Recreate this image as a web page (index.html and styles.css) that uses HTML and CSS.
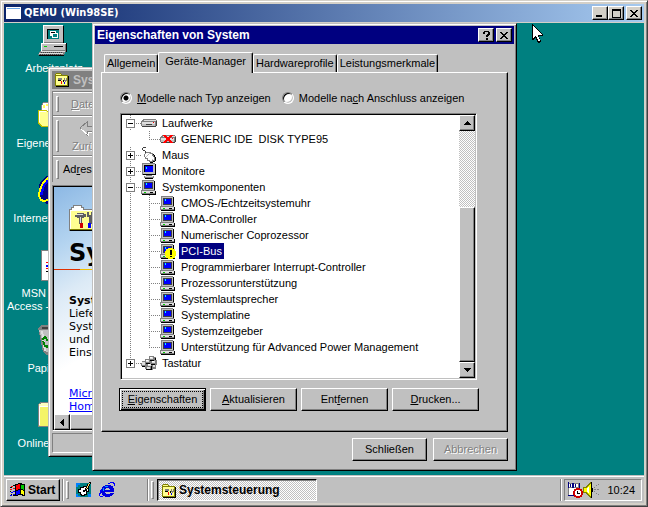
FILE: index.html
```
<!DOCTYPE html>
<html lang="de">
<head>
    <meta charset="UTF-8">
    <meta name="viewport" content="width=device-width, initial-scale=1.0">
    <title>QEMU (Win98SE)</title>
    <link rel="stylesheet" href="styles.css">
</head>
<body>

<!-- shared icons -->
<svg class="sprites" aria-hidden="true">
    <symbol id="pc" viewBox="0 0 16 16">
        <path fill="#808080" d="M1 1h12v10H1z"/>
        <path fill="#c0c0c0" d="M2 2h11v9H2z"/>
        <path fill="#000" d="M13 2h1v9h-1z"/>
        <path fill="#404040" d="M3 3h9v7H3z"/>
        <path fill="#00f" d="M4 4h7v5H4z"/>
        <path fill="#0ff" d="M5 4h1v2H5z"/>
        <path fill="#808080" d="M0 11h14v4H0z"/>
        <path fill="#dfdfdf" d="M1 12h13v2H1z"/>
        <path fill="#000" d="M14 12h1v4H1v-1h13zM9 13h3v1H9z"/>
        <path fill="#0c0" d="M3 13h2v1H3z"/>
    </symbol>
    <symbol id="monitor" viewBox="0 0 16 16">
        <path fill="#808080" d="M1 0h13v12H1z"/>
        <path fill="#c0c0c0" d="M2 1h12v10H2z"/>
        <path fill="#000" d="M14 1h1v11H2v-1h12zM3 2h9v7H3z"/>
        <path fill="#00f" d="M4 3h8v6H4z"/>
        <path fill="#0ff" d="M5 4h1v2H5z"/>
        <path fill="#808080" d="M5 12h6v1H5zM3 13h10v2H3z"/>
        <path fill="#dfdfdf" d="M4 13h8v1H4z"/>
        <path fill="#000" d="M4 15h8v1H4z"/>
    </symbol>
    <symbol id="drive" viewBox="0 0 16 16">
        <path fill="#808080" d="M2 4h13v1h1v6h-1v1H1v-1H0V6h1V5h1z"/>
        <path fill="#dfdfdf" d="M3 5h12v1H3zM1 7h13v2H1z"/>
        <path fill="#c0c0c0" d="M1 9h13v2H1z"/>
        <path fill="#404040" d="M5 9h6v1H5zM1 12v-1h14V6h1v5h-1v1z"/>
        <path fill="#f00" d="M12 7h1v1h-1z"/>
    </symbol>
    <symbol id="mouse" viewBox="0 0 16 16">
        <path fill="#404040" d="M2 0h3v1H2zM1 1h1v2H1zM2 3h2v1H2zM4 4h1v2H4z"/>
        <path fill="#808080" d="M5 5h5v1h2v2h1v2h1v4h-2v1H8v-1H6v-2H4v-2H3V7h1V6h1z"/>
        <path fill="#fff" d="M5 6h4v1h2v2h1v1h1v3h-2v1H9v-1H7v-2H5v-1H4V7h1z"/>
        <path fill="#c0c0c0" d="M8 6h1v1H8zM7 7h1v1H7zM6 8h1v1H6zM5 9h1v1H5zM11 12h1v1h-1z"/>
        <path fill="#000" d="M12 7h1v1h1v2h1v4h-1v1h-2v1H9v-1h3v-1h2v-4h-1V8h-1z"/>
    </symbol>
    <symbol id="keyboard" viewBox="0 0 16 16">
        <path fill="#808080" d="M8 1h5v1h2v3h1v5h-1v4h-3v1H6v-1H4v-2H1v-1H0V8h1V6h3V4h4z"/>
        <path fill="#dfdfdf" d="M9 2h3v2H9zM5 5h3v2H5zM1 7h3v3H1zM11 6h3v2h-3zM7 9h3v2H7zM6 12h3v2H6zM12 10h2v2h-2z"/>
        <path fill="#000" d="M9 5h4v1H9zM5 8h4v1H5zM1 11h3v1H1zM10 9h4v1h-4zM14 3h1v2h-1zM10 11h1v4h-1zM5 14h5v1H5z"/>
        <path fill="#fff" d="M9 2h2v1H9zM5 5h2v1H5zM11 6h2v1h-2zM7 9h2v1H7z"/>
    </symbol>
    <symbol id="cpl" viewBox="0 0 16 16">
        <path fill="#808000" d="M1 2h1V1h5v1h1v1h6v11H1z"/>
        <path fill="#ffff90" d="M2 2h5v1H2zM2 4h11v9H2z"/>
        <path fill="#000" d="M14 4h1v11H2v-1h12z"/>
        <path fill="#808080" d="M4 6h4v2H4zM10 6h1v2h1V6h1v3h-1v1h-1V9h-1z"/>
        <path fill="#000" d="M4 8h3v1H4zM9 8h1v2H9z"/>
        <path fill="#f00" d="M7 9h1v3H7z"/>
        <path fill="#00f" d="M10 10h1v2h-1z"/>
    </symbol>
    <symbol id="ie" viewBox="0 0 16 16">
        <path fill="#0000e0" d="M6 3h6v1h2v2h1v4H6v1h1v1h4v-1h4v1h-1v1h-1v1h-2v1H6v-1H4v-1H3v-2H2V7h1V5h1V4h2zM6 8h5V7h-1V6H7v1H6z"/>
        <path fill="#00f" d="M11 0h4v1h1v3h-1V2h-1V1h-3v1H9V1h2zM2 7h1v2H2v3H1v2h3v1H1v-1H0v-3h1V8h1z"/>
        <path fill="#00a0ff" d="M6 4h3v1H6zM4 6h1v3H4z"/>
    </symbol>
    <symbol id="close" viewBox="0 0 8 7"><path d="M0 0h2v1h1v1h2V1h1V0h2v1H7v1H6v1H5v1h1v1h1v1h1v1H6V6H5V5H3v1H2v1H0V6h1V5h1V4h1V3H2V2H1V1H0z"/></symbol>
    <symbol id="up" viewBox="0 0 7 4"><path d="M3 0h1v1h1v1h1v1h1v1H0V3h1V2h1V1h1z"/></symbol>
    <symbol id="down" viewBox="0 0 7 4"><path d="M0 0h7v1H6v1H5v1H4v1H3V3H2V2H1V1H0z"/></symbol>
    <symbol id="left" viewBox="0 0 4 7"><path d="M4 0v7H3V6H2V5H1V4H0V3h1V2h1V1h1V0z"/></symbol>
</svg>

<div class="qemu">
    <header class="qemu-title">
        <svg class="icon16" viewBox="0 0 16 16"><path fill="#fff" d="M0 2h15v12H0z"/><path fill="#6aa6e8" d="M1 3h13v1H1z"/></svg>
        <h1>QEMU (Win98SE)</h1>
        <button class="cap qcap" aria-label="Minimieren"><svg width="8" height="8"><path d="M0 6h6v2H0z"/></svg></button>
        <button class="cap qcap" aria-label="Maximieren"><svg width="9" height="9"><path d="M0 0h9v9H0zM1 2v6h7V2z" fill-rule="evenodd"/></svg></button>
        <button class="cap qcap last" aria-label="Schließen"><svg width="8" height="7"><use href="#close"/></svg></button>
    </header>

    <main class="desktop">
        <nav class="shortcuts">
            <a href="#">
                <svg viewBox="0 0 32 32">
                    <path fill="#808080" d="M5 0h20v19H5z"/><path fill="#fff" d="M5 0h20v1H6v18H5z"/><path fill="#c0c0c0" d="M6 1h19v16H6z"/>
                    <path fill="#000" d="M25 1h1v18h-1zM9 4h12v10H9z"/><path fill="#008080" d="M10 5h11v9H10z"/>
                    <path fill="#fff" d="M12 6h6v5h-6zM14 8h6v5h-6z"/><path fill="#000" d="M13 7h4v1h-4z"/><path fill="#008080" d="M15 9h4v3h-4z"/>
                    <path fill="#808080" d="M3 18h25v8H3z"/><path fill="#fff" d="M3 18h25v1H4v7H3z"/><path fill="#c0c0c0" d="M4 19h23v6H4z"/>
                    <path fill="#000" d="M28 18h1v9h-1zM16 21h9v1h-9z"/><path fill="#0c0" d="M6 21h3v1H6z"/>
                    <path fill="#808080" d="M2 26h26l-2 4H0z"/><path fill="#dfdfdf" d="M3 26h24v1H2zM1 28h24v1H1z"/>
                    <path stroke="#404040" stroke-dasharray="1 1" d="M3 27.500h22M2 29.500h22"/><path fill="#000" d="M1 30h25v1H1z"/>
                </svg>
                <span>Arbeitsplatz</span>
            </a>
            <a href="#">
                <svg viewBox="0 0 32 32">
                    <path fill="#808080" d="M3 10V5h1V3h1V2h6v2h10v16H3z"/><path fill="#fff" d="M4 9V5h1V3h6v3h10v14H4z"/><path fill="#ffff60" d="M5 5h2v3H5zM8 4h2v2H8z"/>
                    <path fill="#c0c000" d="M0 10h8l3 3h17v14H3l-3-3z"/><path fill="#ffff90" d="M1 11h7l3 3h16v12H4l-3-3z"/><path fill="#fff" d="M1 11h7v1H2v10H1z"/>
                </svg>
                <span>Eigene Dateien</span>
            </a>
            <a href="#">
                <svg viewBox="0 0 32 32">
                    <circle cx="16" cy="15" r="11" fill="none" stroke="#000080" stroke-width="9"/>
                    <path fill="none" stroke="#00f" stroke-width="3" d="M4 20C3 11 8 5 14 5"/>
                    <path fill="none" stroke="#ff0" stroke-width="2" d="M12 2C5 5 1 14 1 21l2 4q4 2 8-1"/><path fill="#000080" d="M8 14h20v4H8z"/>
                </svg>
                <span>Internet Explorer</span>
            </a>
            <a href="#">
                <svg viewBox="0 0 32 32">
                    <path fill="#808080" d="M3 0h26v31H3z"/><path fill="#fff" d="M4 1h24v29H4z"/>
                    <path fill="#f00" d="M8 12h2v1H8zM8 18h2v1H8z"/><path fill="#00f" d="M8 15h2v2H8z"/><path fill="#000" d="M8 21h2v1H8z"/>
                </svg>
                <span>MSN Internet<br>Access - Einrichten</span>
            </a>
            <a href="#">
                <svg viewBox="0 0 32 32">
                    <path fill="#808080" d="M0 3l4-3h20l4 3-3 25-5 2H9l-4-3z"/><path fill="#c0c0c0" d="M1 5h26l-3 22H8z"/><path fill="#404040" d="M4 2h19v2H4z"/>
                    <path fill="#dfdfdf" d="M3 6h2l3 20H6z"/><path fill="none" stroke="#008000" stroke-width="2" d="M4 15l3-3 3 4M5 16l2 5h3M8 22l6-2"/>
                </svg>
                <span>Papierkorb</span>
            </a>
            <a href="#">
                <svg viewBox="0 0 32 32">
                    <path fill="#808080" d="M0 4l3-2h7l2 2h16v23H0z"/><path fill="#ffffc0" d="M1 4l3-1h5l2 2h16v2H1z"/><path fill="#f4f468" d="M1 6h26v20H1z"/>
                    <path fill="#fff" d="M1 6h26v1H2v18H1z"/>
                </svg>
                <span>Online-Dienste</span>
            </a>
        </nav>

        <!-- control panel window in the background -->
        <section class="window explorer">
            <div class="titlebar inactive">
                <svg class="icon16"><use href="#cpl"/></svg>
                <h2>System</h2>
            </div>
            <div class="bands">
                <div class="band menu"><i class="grip"></i><span class="off"><u>D</u>atei</span></div>
                <div class="band tools"><i class="grip"></i>
                    <button class="back off" disabled>
                        <svg width="20" height="16" viewBox="0 0 20 16"><path fill="#c0c0c0" stroke="#808080" d="M1 8l7-6v4h11v5H8v4z"/><path fill="none" stroke="#fff" d="M2 9l7 6v-3h10"/></svg>
                        Zurück
                    </button>
                </div>
                <div class="band address"><i class="grip"></i><span>Ad<u>r</u>esse</span></div>
            </div>
            <div class="view">
                <div class="page">
                    <svg class="folder" viewBox="0 0 32 28">
                        <path fill="#808080" d="M0 5h2V3h2V1h9v2h2v2h16v22H0z"/><path fill="#fff" d="M1 6h2V4h2V2h7v2h2v2h16v1H2v18H1z"/>
                        <path fill="#ffff90" d="M2 7h28v18H2z"/><path fill="#808000" d="M1 25h30v1H1z"/><path fill="#000" d="M1 27h31V6h-1v20H1z"/>
                        <path fill="#606060" d="M6 11h2V9h7v1h2v3h-2v1h-2v6h-3v-6H8v-1H6zM18 8h2v3h2V8h2v5h-1v7h-3v-7h-2z"/><path fill="#dfdfdf" d="M8 10h6v1H8zM11 13h1v6h-1z"/>
                        <path fill="#d00000" d="M11 19h3v5h-3z"/><path fill="#00f" d="M19 19h3v5h-3z"/>
                    </svg>
                    <h3>System</h3>
                    <div class="rule"></div>
                    <p><b>System</b><br>Liefert<br>System<br>und<br>Einstell.</p>
                    <p class="links"><a href="#">Microsoft</a><br><a href="#">Home</a></p>
                </div>
                <div class="hscroll"><button class="arrow" aria-label="Nach links"><svg width="4" height="7"><use href="#left"/></svg></button><div class="thumb"></div></div>
            </div>
            <div class="status"></div>
        </section>

        <section class="window dialog">
            <div class="titlebar">
                <h2>Eigenschaften von System</h2>
                <button class="cap" aria-label="Hilfe"><svg width="7" height="9"><path d="M1 0h5v1h1v3H6v1H5v1H3V4h1V3h1V1H2v2H0V1h1zM3 7h2v2H3z"/></svg></button>
                <button class="cap last" aria-label="Schließen"><svg width="8" height="7"><use href="#close"/></svg></button>
            </div>
            <div class="dialog-body">
                <div class="tabs" role="tablist">
                    <button role="tab">Allgemein</button>
                    <button role="tab" class="active" aria-selected="true">Geräte-Manager</button>
                    <button role="tab">Hardwareprofile</button>
                    <button role="tab">Leistungsmerkmale</button>
                </div>
                <div class="panel">
                    <div class="radios">
                        <label><input type="radio" name="view" checked><span><u>M</u>odelle nach Typ anzeigen</span></label>
                        <label><input type="radio" name="view"><span>Modelle na<u>c</u>h Anschluss anzeigen</span></label>
                    </div>
                    <div class="treebox">
                        <ul class="tree">
                            <li><span class="cell line"><button class="box" aria-label="Reduzieren"></button></span><svg class="icon16"><use href="#drive"/></svg><span class="name">Laufwerke</span></li>
                            <li><span class="cell"></span><span class="cell line end"></span><svg class="icon16" viewBox="0 0 16 16"><use href="#drive"/><path fill="#f00" d="M3 4h3v1h1v1h2V5h1V4h3v1h-1v1h-1v1h-1v2h1v1h1v1h1v1h-3v-1H9v-1H7v1H6v1H3v-1h1v-1h1V9h1V7H5V6H4V5H3z"/></svg><span class="name">GENERIC IDE&nbsp; DISK TYPE95</span></li>
                            <li><span class="cell line"><button class="box plus" aria-label="Erweitern"></button></span><svg class="icon16"><use href="#mouse"/></svg><span class="name">Maus</span></li>
                            <li><span class="cell line"><button class="box plus" aria-label="Erweitern"></button></span><svg class="icon16"><use href="#monitor"/></svg><span class="name">Monitore</span></li>
                            <li><span class="cell line"><button class="box" aria-label="Reduzieren"></button></span><svg class="icon16"><use href="#pc"/></svg><span class="name">Systemkomponenten</span></li>
                            <li><span class="cell trunk"></span><span class="cell line"></span><svg class="icon16"><use href="#pc"/></svg><span class="name">CMOS-/Echtzeitsystemuhr</span></li>
                            <li><span class="cell trunk"></span><span class="cell line"></span><svg class="icon16"><use href="#pc"/></svg><span class="name">DMA-Controller</span></li>
                            <li><span class="cell trunk"></span><span class="cell line"></span><svg class="icon16"><use href="#pc"/></svg><span class="name">Numerischer Coprozessor</span></li>
                            <li><span class="cell trunk"></span><span class="cell line"></span><svg class="icon16" viewBox="0 0 16 16"><use href="#pc"/><path fill="#ff0" d="M8 5h5v1h2v2h1v5h-1v2h-2v1H8v-1H6v-2H5V8h1V6h2z"/><path fill="#000" d="M10 7h2v5h-2zM10 13h2v1h-2z"/></svg><span class="name selected">PCI-Bus</span></li>
                            <li><span class="cell trunk"></span><span class="cell line"></span><svg class="icon16"><use href="#pc"/></svg><span class="name">Programmierbarer Interrupt-Controller</span></li>
                            <li><span class="cell trunk"></span><span class="cell line"></span><svg class="icon16"><use href="#pc"/></svg><span class="name">Prozessorunterstützung</span></li>
                            <li><span class="cell trunk"></span><span class="cell line"></span><svg class="icon16"><use href="#pc"/></svg><span class="name">Systemlautsprecher</span></li>
                            <li><span class="cell trunk"></span><span class="cell line"></span><svg class="icon16"><use href="#pc"/></svg><span class="name">Systemplatine</span></li>
                            <li><span class="cell trunk"></span><span class="cell line"></span><svg class="icon16"><use href="#pc"/></svg><span class="name">Systemzeitgeber</span></li>
                            <li><span class="cell trunk"></span><span class="cell line end"></span><svg class="icon16"><use href="#pc"/></svg><span class="name">Unterstützung für Advanced Power Management</span></li>
                            <li><span class="cell line end"><button class="box plus" aria-label="Erweitern"></button></span><svg class="icon16"><use href="#keyboard"/></svg><span class="name">Tastatur</span></li>
                        </ul>
                        <div class="vscroll">
                            <button class="arrow" aria-label="Nach oben"><svg width="7" height="4"><use href="#up"/></svg></button>
                            <div class="track"></div>
                            <div class="thumb"></div>
                            <button class="arrow" aria-label="Nach unten"><svg width="7" height="4"><use href="#down"/></svg></button>
                        </div>
                    </div>
                    <div class="actions">
                        <button class="btn default"><span><u>E</u>igenschaften</span></button>
                        <button class="btn"><span><u>A</u>ktualisieren</span></button>
                        <button class="btn"><span>Ent<u>f</u>ernen</span></button>
                        <button class="btn"><span><u>D</u>rucken...</span></button>
                    </div>
                </div>
                <div class="footer">
                    <button class="btn">Schließen</button>
                    <button class="btn" disabled>Abbrechen</button>
                </div>
            </div>
        </section>

        <svg class="cursor" width="12" height="19" viewBox="0 0 12 19">
            <path fill="#000" d="M0 0h1v1h1v1h1v1h1v1h1v1h1v1h1v1h1v1h1v1h1v1h1v2H7v2h1v2h1v2H8v1H6v-1H5v-2H4v-2H3v1H2v1H0z"/>
            <path fill="#fff" d="M1 2h1v1h1v1h1v1h1v1h1v1h1v1h1v1h1v1h1v1H6v2h1v2h1v2H6v-2H5v-2H4v-1H3v1H2v1H1z"/>
        </svg>
    </main>

    <footer class="taskbar">
        <button class="start">
            <svg width="17" height="16" viewBox="0 0 17 16">
                <path fill="#000" d="M6 2h3V1h4v1h3v12h-3v-1H9v1H6z"/>
                <path fill="#f00" d="M7 3h2V2h2v5H9v1H7zM2 4h2v1H2zM4 6h2v1H4zM1 7h2v1H1z"/><path fill="#0c0" d="M12 3h3v5h-1V7h-2z"/>
                <path fill="#00f" d="M7 9h2V8h2v4H9v1H7zM2 10h2v1H2zM4 12h2v1H4zM1 13h2v1H1zM4 9h2v1H4z"/><path fill="#ff0" d="M12 8h2v1h1v4h-1v-1h-2z"/>
                <path fill="#000" d="M4 3h2v1H4zM1 5h2v1H1zM4 13h2v1H4zM1 9h1v1H1zM2 12h1v1H2z"/>
            </svg>
            Start
        </button>
        <i class="sep"></i><i class="grip"></i>
        <div class="quick">
            <a href="#" aria-label="Desktop anzeigen"><svg class="icon16" viewBox="0 0 16 16"><path fill="#008080" d="M0 1h15v14H0z"/><path fill="#0080ff" d="M0 1h4v2H2v2H0zM0 12h2v2h2v1H0zM12 12h3v3h-3z"/><path fill="#000" d="M2 7h2V5h3V4h5v2h1v4h-2v3H9v1H5v-1H4v-2H2z"/><path fill="#fff" d="M3 8h2V6h3V5h3v2h1v2h-2v3H8v1H6v-1H5v-2H3z"/><path fill="#000" d="M13 0h2v2h-1v2h-1v2h-1v1h-1v2H9v1H7V8h2V6h1V4h1V2h2z"/><path fill="#ffe060" d="M13 1h1v1h-1v2h-1v2h-1v1h-1V6h1V4h1V2h1z"/></svg></a>
            <a href="#" aria-label="Internet Explorer"><svg class="icon16"><use href="#ie"/></svg></a>
        </div>
        <i class="sep"></i><i class="grip"></i>
        <button class="task"><svg class="icon16"><use href="#cpl"/></svg>Systemsteuerung</button>
        <i class="sep tray-sep"></i>
        <div class="tray">
            <svg class="icon16" viewBox="0 0 16 16"><path fill="#808080" d="M1 1h12v13H1z"/><path fill="#fff" d="M2 6h9v8H2zM2 2h3v3H2zM7 2h4v3H7z"/><path fill="#000080" d="M1 0h1v6H1zM3 2h1v3H3zM5 1h2v5H5zM8 2h1v3H8zM12 1h1v6h-1zM1 13h6v1H1z"/><circle cx="11" cy="11" r="4" fill="#fff" stroke="#c00" stroke-width="2"/><path fill="#000" d="M10 9h1v2h2v1h-3z"/></svg>
            <svg class="icon16" viewBox="0 0 16 16"><path fill="#808000" d="M0 5h3V4h1V3h1V2h1V1h1V0h2v16H7v-1H6v-1H5v-1H4v-1H3v-1H0z"/><path fill="#ff0" d="M1 6h3V5h1V4h1V3h1V2h1v12H7v-1H6v-1H5v-1H4v-1H1z"/><path fill="#fff" d="M4 6h1V5h1v6H5v-1H4z"/><path fill="#000" d="M8 0h1v6h1v4H9v6H8z"/><path fill="#808080" d="M11 5h1v1h-1zM13 3h1v1h-1zM15 2h1v1h-1zM11 7h2v1h-2zM14 7h2v1h-2zM11 9h1v1h-1zM13 11h1v1h-1zM15 12h1v1h-1z"/></svg>
            <time>10:24</time>
        </div>
    </footer>
</div>
</body>
</html>
```
FILE: styles.css
```
* {
    box-sizing: border-box;
}
body {
    margin: 0;
    font: 11px/13px "Liberation Sans", Arial, sans-serif;
    color: #000;
}
h1, h2, h3, p, ul {
    margin: 0;
    padding: 0;
}
button {
    font: inherit;
    color: inherit;
    padding: 0;
    margin: 0;
    border: 0;
    border-radius: 0;
    background: #c0c0c0;
}
svg {
    display: block;
    flex: none;
    shape-rendering: crispEdges;
}
.sprites {
    display: none;
}
.icon16 {
    width: 16px;
    height: 16px;
}

/* host window */
.qemu {
    display: flex;
    flex-direction: column;
    min-height: 100vh;
    padding: 3px;
    background: #d4d0c8;
    border: 1px solid;
    border-color: #d4d0c8 #404040 #404040 #d4d0c8;
    box-shadow: inset 1px 1px #fff, inset -1px -1px #808080;
}
.qemu-title {
    display: flex;
    align-items: center;
    height: 18px;
    margin-bottom: 1px;
    padding: 0 2px;
    background: linear-gradient(90deg, #0a246a, #a6caf0);
    color: #fff;
}
.qemu-title h1 {
    flex: 1;
    margin-left: 2px;
    font: bold 11px/18px "DejaVu Sans Condensed", Tahoma, sans-serif;
}

/* raised 3d edges */
.cap, .arrow, .thumb {
    border: 1px solid;
    border-color: #fff #000 #000 #fff;
    box-shadow: inset -1px -1px #808080;
    background: #c0c0c0;
}
.cap {
    display: grid;
    place-content: center;
    width: 16px;
    height: 14px;
}
.cap.qcap {
    background: #d4d0c8;
}
.cap.last {
    margin-left: 2px;
}

.desktop {
    position: relative;
    flex: 1;
    min-height: 452px;
    background: #008080;
    overflow: hidden;
}
.shortcuts {
    display: flex;
    flex-direction: column;
    width: 100px;
    padding-top: 2px;
}
.shortcuts a {
    display: flex;
    flex-direction: column;
    align-items: center;
    height: 75px;
    color: #fff;
    text-decoration: none;
    text-align: center;
    white-space: nowrap;
}
.shortcuts svg {
    width: 32px;
    height: 32px;
    margin-bottom: 5px;
}

.window {
    position: absolute;
    background: #c0c0c0;
    border: 1px solid;
    border-color: #c0c0c0 #000 #000 #c0c0c0;
    box-shadow: inset 1px 1px #fff, inset -1px -1px #808080;
}
.titlebar {
    display: flex;
    align-items: center;
    height: 18px;
    padding: 0 2px;
    background: #000080;
    color: #fff;
}
.titlebar h2 {
    flex: 1;
    font-size: 12px;
    line-height: 18px;
}
.titlebar.inactive {
    background: #808080;
    color: #c0c0c0;
}

/* explorer window */
.explorer {
    left: 44px;
    top: 44px;
    width: 160px;
    padding: 3px;
}
.explorer h2 {
    margin-left: 3px;
}
.bands {
    margin: 2px 0 3px;
    border: 1px solid #808080;
    border-bottom: 0;
}
.band {
    display: flex;
    align-items: center;
    padding: 3px;
    border-top: 1px solid #fff;
    border-bottom: 1px solid #808080;
}
.grip {
    width: 3px;
    align-self: stretch;
    border: 1px solid;
    border-color: #fff #808080 #808080 #fff;
}
.menu {
    height: 24px;
}
.menu span {
    margin-left: 12px;
}
.tools {
    height: 40px;
}
.back {
    display: flex;
    flex-direction: column;
    align-items: center;
    gap: 4px;
    margin-left: 13px;
}
.address {
    height: 26px;
    border-bottom: 0;
}
.address span {
    margin-left: 4px;
}
.off, .btn:disabled {
    color: #808080;
    text-shadow: 1px 1px #fff;
}
.view {
    border: 1px solid;
    border-color: #808080 #fff #fff #808080;
    box-shadow: inset 1px 1px #000;
    padding: 1px 0 0 1px;
}
.page {
    height: 227px;
    padding: 17px 15px 0;
    background: linear-gradient(150deg, #8cb8e4, #b4d4f0 20%, #dceaf6 36%, #fff 60%);
    font: 11px/13px "DejaVu Sans", Verdana, sans-serif;
    overflow: hidden;
}
.folder {
    width: 32px;
    height: 28px;
}
.page h3 {
    font-size: 24px;
    line-height: 30px;
    margin: 6px 0 1px;
}
.rule {
    height: 1px;
    margin: 0 -15px 24px;
    background: linear-gradient(90deg, #e03000 26px, #f0c000 26px);
}
.links {
    margin-top: 28px;
}
.links a {
    color: #00f;
}
.hscroll {
    display: flex;
    height: 16px;
}
.arrow {
    display: grid;
    place-content: center;
    width: 16px;
    height: 16px;
}
.hscroll .thumb {
    flex: 1;
}
.status {
    height: 20px;
    margin-top: 2px;
    border: 1px solid;
    border-color: #808080 #fff #fff #808080;
}

/* system properties dialog */
.dialog {
    left: 88px;
    top: 0;
    width: 425px;
    padding: 2px;
}
.dialog-body {
    padding: 8px 6px 7px;
}
.tabs {
    display: flex;
    align-items: flex-end;
    padding-left: 3px;
}
.tabs button {
    height: 18px;
    padding: 0 2px;
    border: 1px solid;
    border-color: #fff #000 transparent #fff;
    border-bottom: 0;
    border-radius: 2px 2px 0 0;
    box-shadow: inset -1px 0 #808080;
    white-space: nowrap;
}
.tabs .active {
    z-index: 1;
    height: 21px;
    margin-bottom: -1px;
    padding: 0 6px 3px;
}
.panel {
    padding: 17px 28px 20px 17px;
    border: 1px solid;
    border-color: #fff #000 #000 #fff;
    box-shadow: inset -1px -1px #808080;
}
.radios {
    display: flex;
    gap: 11px;
    height: 16px;
    margin: 0 1px 7px;
}
.radios label {
    display: flex;
    align-items: center;
    gap: 5px;
}
.radios input {
    appearance: none;
    width: 12px;
    height: 12px;
    margin: 0;
    border: 1px solid;
    border-color: #808080 #fff #fff #808080;
    border-radius: 50%;
    background: #fff;
    box-shadow: inset 1px 1px #000, inset -1px -1px #c0c0c0;
}
.radios input:checked {
    background: radial-gradient(circle, #000 2px, #fff 3px);
}
.treebox {
    display: flex;
    margin: 0 2px 8px 1px;
    border: 1px solid;
    border-color: #808080 #fff #fff #808080;
    background: #fff;
    box-shadow: inset 1px 1px #000, inset -1px -1px #c0c0c0;
    padding: 1px;
}
.tree {
    flex: 1;
    padding-bottom: 7px;
    list-style: none;
}
.tree li {
    display: flex;
    height: 16px;
    white-space: nowrap;
}
.cell {
    display: block;
    width: 19px;
    padding: 4px;
}
.trunk {
    background: repeating-linear-gradient(#808080 0 1px, transparent 1px 2px) 8px 0 / 1px 16px no-repeat;
}
.line {
    background:
        repeating-linear-gradient(#808080 0 1px, transparent 1px 2px) 8px 0 / 1px 16px no-repeat,
        repeating-linear-gradient(90deg, #808080 0 1px, transparent 1px 2px) 8px 8px / 11px 1px no-repeat;
}
.end {
    background-size: 1px 8px, 11px 1px;
}
.box {
    display: block;
    width: 9px;
    height: 9px;
    border: 1px solid #808080;
    background: linear-gradient(#000, #000) center / 5px 1px no-repeat #fff;
}
.plus {
    background:
        linear-gradient(#000, #000) center / 5px 1px no-repeat,
        linear-gradient(#000, #000) center / 1px 5px no-repeat #fff;
}
.name {
    margin-left: 3px;
    padding: 0 2px;
    line-height: 16px;
}
.selected {
    background: #000080;
    color: #fff;
}
.vscroll {
    display: flex;
    flex-direction: column;
    width: 16px;
}
.track {
    flex: 1;
}
.track, .task {
    background: conic-gradient(#fff 25%, #c0c0c0 0 50%, #fff 0 75%, #c0c0c0 0) 0 0 / 2px 2px;
}
.vscroll .thumb {
    flex: 2;
}
.actions {
    display: grid;
    grid-template-columns: repeat(4, 1fr);
    gap: 4px;
}
.btn {
    height: 23px;
    border: 1px solid;
    border-color: #fff #000 #000 #fff;
    box-shadow: inset -1px -1px #808080;
}
.default {
    padding: 2px;
    border-color: #000;
    box-shadow: inset 1px 1px #fff, inset -1px -1px #000, inset -2px -2px #808080;
}
.default span {
    display: block;
    border: 1px dotted #000;
    line-height: 15px;
}
.footer {
    display: flex;
    justify-content: flex-end;
    gap: 6px;
    padding-top: 6px;
}
.footer .btn {
    width: 75px;
}
.cursor {
    position: absolute;
    left: 528px;
    top: 1px;
}

/* taskbar */
.taskbar {
    display: flex;
    height: 28px;
    padding: 3px 2px 2px;
    border-top: 1px solid #c0c0c0;
    background: #c0c0c0;
    box-shadow: inset 0 1px #fff;
}
.start, .task {
    display: flex;
    align-items: center;
    font-size: 12px;
    font-weight: bold;
    border: 1px solid;
}
.start {
    width: 54px;
    gap: 2px;
    padding-left: 2px;
    border-color: #fff #000 #000 #fff;
    box-shadow: inset -1px -1px #808080;
}
.sep {
    width: 2px;
    margin: 0 2px;
    border-left: 1px solid #808080;
    border-right: 1px solid #fff;
}
.taskbar .grip {
    margin: 2px 0;
}
.quick {
    display: flex;
    align-items: center;
    gap: 7px;
    width: 76px;
    padding-left: 7px;
}
.task {
    flex: 0 1 160px;
    margin-left: 3px;
    padding: 1px 3px 0;
    gap: 2px;
    border-color: #000 #fff #fff #000;
    box-shadow: inset 1px 1px #808080;
}
.tray-sep {
    margin-left: auto;
}
.tray {
    display: flex;
    align-items: center;
    padding: 0 6px 0 2px;
    border: 1px solid;
    border-color: #808080 #fff #fff #808080;
}
.tray time {
    margin-left: 8px;
}
```
